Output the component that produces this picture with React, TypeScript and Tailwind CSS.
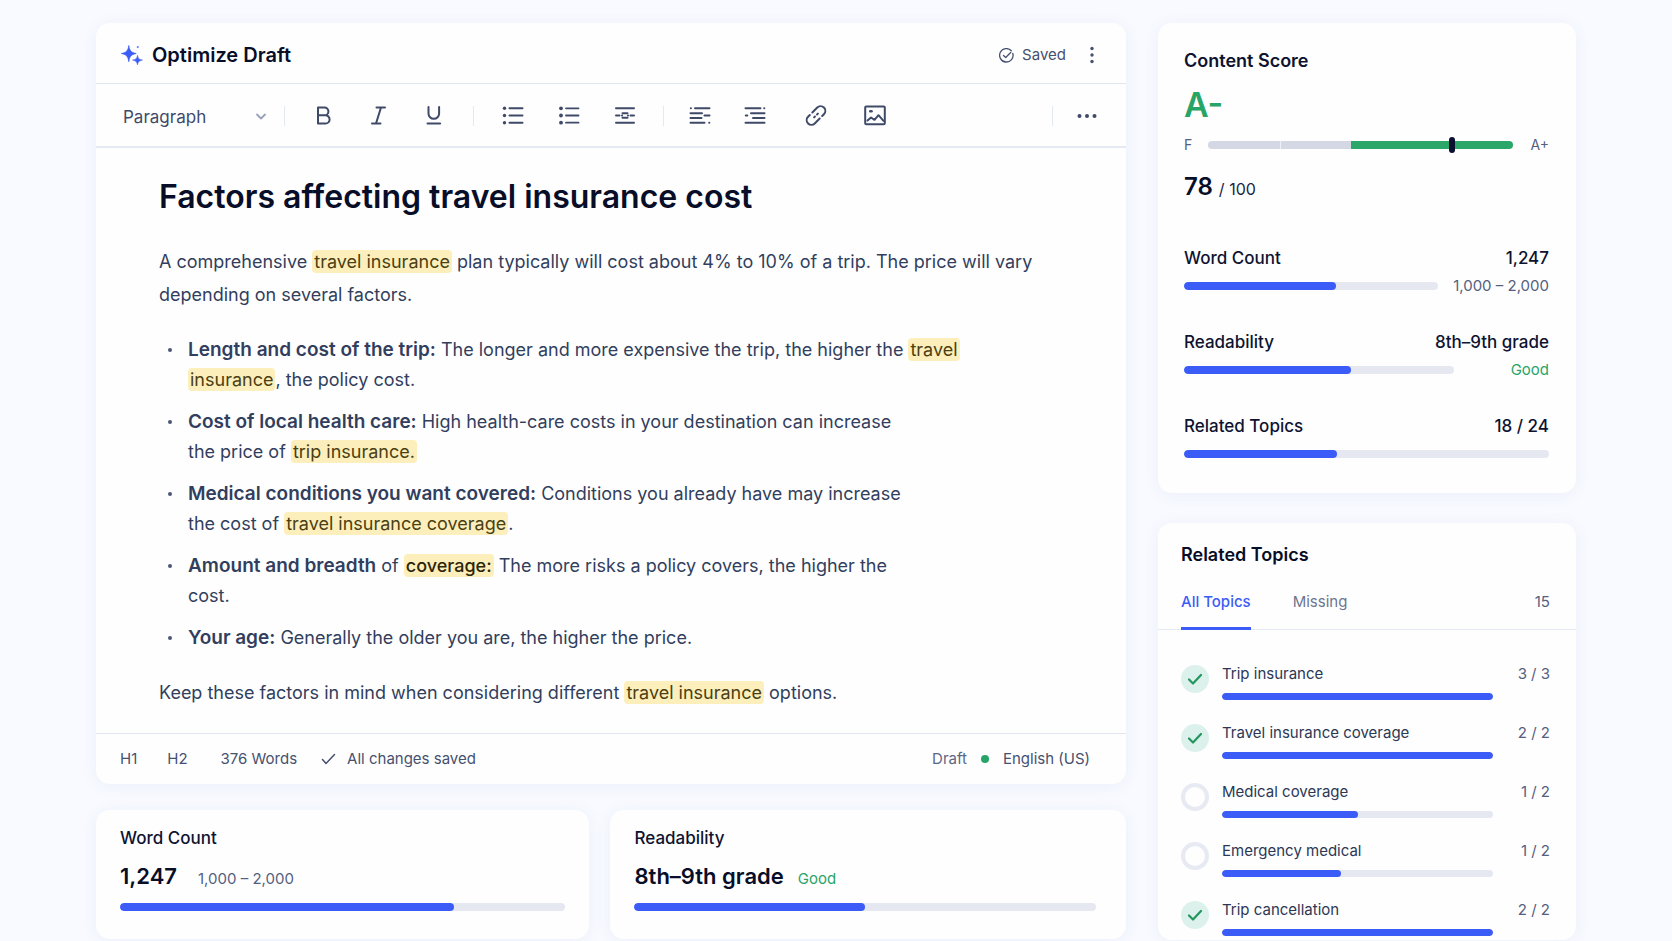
import { useState } from "react";
import type { ReactNode } from "react";

const card =
  "rounded-[14px] bg-[#fefefe] shadow-[0_2px_16px_rgba(70,100,190,0.07)]";

function Svg({ w, h, children }: { w: number; h: number; children: ReactNode }) {
  return (
    <svg
      width={w}
      height={h}
      viewBox={`0 0 ${w} ${h}`}
      fill="none"
      stroke="currentColor"
      strokeWidth="2"
      strokeLinecap="round"
      strokeLinejoin="round"
      aria-hidden="true"
      className="shrink-0"
    >
      {children}
    </svg>
  );
}

const icons = {
  bold: <path d="M5 2.500h6.500a3.900 3.900 0 0 1 0 7.800H5zM5 10.300h7.500a4.100 4.100 0 0 1 0 8.200H5z" />,
  italic: <path d="M8.500 2.500h8.500M4 18.500h8.500M13 2.500l-5 16" />,
  underline: <path d="M5.500 2v6.500a5.300 5.300 0 0 0 10.600 0V2M4.500 18.500h12.600" />,
  bullets: (
    <>
      <path d="M7.500 3.300h13M7.500 10.500h13M7.500 17.700h13" />
      <g fill="currentColor" stroke="none">
        <circle cx="2.500" cy="3.300" r="1.700" />
        <circle cx="2.500" cy="10.500" r="1.700" />
        <circle cx="2.500" cy="17.700" r="1.700" />
      </g>
    </>
  ),
  compact: (
    <>
      <path d="M8 3.300h12.500M8 10.500h12.500M8 17.700h12.500" strokeWidth="1.800" />
      <g fill="currentColor" stroke="none">
        <circle cx="3" cy="3.300" r="1.900" />
        <circle cx="3" cy="10.500" r="1.900" />
        <circle cx="3" cy="17.700" r="1.900" />
      </g>
    </>
  ),
  center: (
    <path d="M2 3.300h18M2 17.700h18M2 10.500h3.500M16.500 10.500H20M8.500 8.300h5M8.500 12.700h5M8 10.500h.1M14 10.500h.1" />
  ),
  outdent: (
    <path d="M1.800 3.300h.1M6 3.300h14.500M1.500 8.200h11.500M1.500 13h11M15.500 10.500h5M1.500 17.700h14M20.200 17.700h.1" />
  ),
  indent: (
    <path d="M1.500 3.300h15M20.200 3.300h.1M7 8.200h13.500M9 13h11.500M1.800 10.500h1.500M1.500 17.700h19" />
  ),
  link: (
    <g transform="rotate(-45 11 10.500)">
      <path d="M10.500 5.800h7a4.700 4.700 0 0 1 0 9.400H15M11.500 15.200h-7a4.700 4.700 0 0 1 0-9.400H7M8.300 10.500h1.200M12.500 10.500h1.200" />
    </g>
  ),
  image: (
    <>
      <rect x="1.200" y="1.500" width="19.600" height="17.800" rx="1" />
      <path d="M3.500 15.500l3.500-3 3.500 2.300 4-4.600 5 5.600" />
      <path d="M6.300 6.300h1.200" strokeWidth="2.600" />
    </>
  ),
};

function Tool({ label, name }: { label: string; name: keyof typeof icons }) {
  return (
    <button type="button" aria-label={label} className="rounded hover:bg-slate-100">
      <Svg w={22} h={21}>
        {icons[name]}
      </Svg>
    </button>
  );
}

function Divider() {
  return <span className="block h-5 w-px bg-[#e3e8f3]" />;
}

function Mark({ children }: { children: ReactNode }) {
  return (
    <mark className="rounded-[4px] bg-[#fdefbb] px-[2px] py-px text-[#4b3f14]">{children}</mark>
  );
}

function Term({ children }: { children: ReactNode }) {
  return <b className="text-[19px] font-semibold">{children}</b>;
}

function Bar({ value, label, thin }: { value: number; label: string; thin?: boolean }) {
  return (
    <div
      role="progressbar"
      aria-label={label}
      aria-valuenow={value}
      aria-valuemin={0}
      aria-valuemax={100}
      className={`w-full overflow-hidden rounded-full bg-[#e5e8f1] ${thin ? "h-[7px]" : "h-2"}`}
    >
      <div className="h-full rounded-full bg-[#3b5cf6]" style={{ width: `${value}%` }} />
    </div>
  );
}

function Item({ children }: { children: ReactNode }) {
  return (
    <li className="flex gap-4">
      <span className="mt-[13px] ml-[9px] size-1 shrink-0 rounded-full bg-[#4d5877]" />
      <p>{children}</p>
    </li>
  );
}

function Metric({
  label,
  value,
  note,
  noteClass,
  percent,
}: {
  label: string;
  value: string;
  note?: string;
  noteClass?: string;
  percent: number;
}) {
  return (
    <div>
      <div className="flex justify-between text-[17px] leading-6 font-medium text-[#0d1330]">
        <span>{label}</span>
        <span>{value}</span>
      </div>
      <div className="mt-1 flex h-6 items-center">
        <Bar value={percent} label={label} />
        {note && <span className={`shrink-0 text-right text-[15px] ${noteClass}`}>{note}</span>}
      </div>
    </div>
  );
}

const topics = [
  { name: "Trip insurance", count: "3 / 3", percent: 100, done: true },
  { name: "Travel insurance coverage", count: "2 / 2", percent: 100, done: true },
  { name: "Medical coverage", count: "1 / 2", percent: 50, done: false },
  { name: "Emergency medical", count: "1 / 2", percent: 44, done: false },
  { name: "Trip cancellation", count: "2 / 2", percent: 100, done: true },
];

function Editor() {
  return (
    <section className={card}>
      <header className="flex h-[61px] items-center border-b border-[#e1e6f1] pt-1 pr-[26px] pl-[25px]">
        <svg width="22" height="20" viewBox="0 0 22 20" fill="#3b5cf6" aria-hidden="true">
          <path d="M7.800.5c.8 5.200 2.200 7 7.400 8-5.200 1.100-6.600 3-7.400 8.200-.8-5.200-2.200-7.100-7.400-8.200 5.200-1 6.600-2.800 7.400-8z" stroke="#3b5cf6" strokeWidth=".7" strokeLinejoin="round" />
          <path d="M16.500 10.200c.6 3.200 1.400 4.200 5 4.900-3.600.8-4.400 1.800-5 4.800-.6-3-1.400-4-5-4.800 3.600-.7 4.400-1.700 5-4.900z" stroke="#3b5cf6" strokeWidth=".5" strokeLinejoin="round" />
          <circle cx="16.800" cy="2" r="1.100" opacity=".8" />
        </svg>
        <h1 className="ml-[9px] text-[20px] leading-6 font-semibold text-[#080d28]">
          Optimize Draft
        </h1>
        <span className="ml-auto flex items-center gap-2 text-[15px] text-[#465170]">
          <svg width="15" height="15" viewBox="0 0 15 15" fill="none" stroke="currentColor" strokeWidth="1.300" strokeLinecap="round" strokeLinejoin="round" aria-hidden="true">
            <path d="M13.800 5.500a6.700 6.700 0 1 1-1.500-2.700M4.500 7.500l2.200 2 5-5" />
          </svg>
          Saved
        </span>
        <button type="button" aria-label="More options" className="ml-[18px] text-[#465170]">
          <svg width="16" height="20" viewBox="0 0 16 20" fill="currentColor" aria-hidden="true">
            <circle cx="8" cy="3.500" r="1.700" />
            <circle cx="8" cy="10" r="1.700" />
            <circle cx="8" cy="16.500" r="1.700" />
          </svg>
        </button>
      </header>

      <div className="flex h-16 items-center border-b-2 border-[#e5e9f3] pt-px pr-[29px] pl-[27px] text-[#3f4a69]">
        <div className="relative w-[144px] pt-1">
          <select
            aria-label="Text style"
            className="h-8 w-full appearance-none bg-transparent text-[17px] outline-none"
          >
            <option>Paragraph</option>
            <option>Heading 1</option>
            <option>Heading 2</option>
          </select>
          <svg width="12" height="8" viewBox="0 0 12 8" fill="none" stroke="#98a2bb" strokeWidth="1.800" strokeLinecap="round" strokeLinejoin="round" aria-hidden="true" className="pointer-events-none absolute top-[15px] right-0">
            <path d="M2 1.500l4 4 4-4" />
          </svg>
        </div>
        <div className="ml-[17px]">
          <Divider />
        </div>
        <div className="ml-7 flex gap-[33px]">
          <Tool label="Bold" name="bold" />
          <Tool label="Italic" name="italic" />
          <Tool label="Underline" name="underline" />
        </div>
        <div className="ml-7">
          <Divider />
        </div>
        <div className="ml-7 flex gap-[34px]">
          <Tool label="Bulleted list" name="bullets" />
          <Tool label="Compact list" name="compact" />
          <Tool label="Align center" name="center" />
        </div>
        <div className="ml-[27px]">
          <Divider />
        </div>
        <div className="ml-[25px] flex gap-[33px]">
          <Tool label="Decrease indent" name="outdent" />
          <Tool label="Increase indent" name="indent" />
        </div>
        <div className="ml-[39px] flex gap-[37px]">
          <Tool label="Insert link" name="link" />
          <Tool label="Insert image" name="image" />
        </div>
        <div className="ml-auto">
          <Divider />
        </div>
        <button type="button" aria-label="More tools" className="ml-6">
          <svg width="20" height="20" viewBox="0 0 20 20" fill="currentColor" aria-hidden="true">
            <circle cx="2.500" cy="10" r="2" />
            <circle cx="10" cy="10" r="2" />
            <circle cx="17.500" cy="10" r="2" />
          </svg>
        </button>
      </div>

      <article className="px-[63px] pt-[25px] pb-[25px] text-[18px] leading-[30px] text-[#323e5d]">
        <h2 className="text-[32px] leading-[48px] font-semibold text-[#080d28]">
          Factors affecting travel insurance cost
        </h2>
        <p className="mt-6 leading-[33px]">
          A comprehensive <Mark>travel insurance</Mark> plan typically will cost about 4% to 10% of
          a trip. The price will vary depending on several factors.
        </p>
        <ul className="mt-6 space-y-3">
          <Item>
            <Term>Length and cost of the trip:</Term> The longer and more expensive the trip, the
            higher the <Mark>travel</Mark>
            <br />
            <Mark>insurance</Mark>, the policy cost.
          </Item>
          <Item>
            <Term>Cost of local health care:</Term> High health-care costs in your destination can
            increase
            <br />
            the price of <Mark>trip insurance.</Mark>
          </Item>
          <Item>
            <Term>Medical conditions you want covered:</Term> Conditions you already have may
            increase
            <br />
            the cost of <Mark>travel insurance coverage</Mark>.
          </Item>
          <Item>
            <Term>Amount and breadth</Term> of{" "}
            <Mark>
              <b className="font-medium text-[#2b2508]">coverage:</b>
            </Mark>{" "}
            The more risks a policy covers, the higher the
            <br />
            cost.
          </Item>
          <Item>
            <Term>Your age:</Term> Generally the older you are, the higher the price.
          </Item>
        </ul>
        <p className="mt-[25px]">
          Keep these factors in mind when considering different <Mark>travel insurance</Mark>{" "}
          options.
        </p>
      </article>

      <footer className="flex h-[51px] items-center border-t border-[#e1e6f1] pr-9 pl-6 text-[15px] text-[#465170]">
        <button type="button">H1</button>
        <button type="button" className="ml-[30px]">
          H2
        </button>
        <span className="ml-[33px]">376 Words</span>
        <span className="ml-6 flex items-center gap-[11px]">
          <svg width="15" height="12" viewBox="0 0 15 12" fill="none" stroke="currentColor" strokeWidth="1.500" strokeLinecap="round" strokeLinejoin="round" aria-hidden="true">
            <path d="M1.500 6.500l3.500 4 8.500-9" />
          </svg>
          All changes saved
        </span>
        <span className="ml-auto text-[#5b6685]">Draft</span>
        <span className="mx-[14px] size-2 rounded-full bg-[#27a567]" />
        <span>English (US)</span>
      </footer>
    </section>
  );
}

function StatCard({
  label,
  value,
  note,
  noteClass,
  percent,
  padding,
}: {
  label: string;
  value: string;
  note: string;
  noteClass: string;
  percent: number;
  padding: string;
}) {
  return (
    <section className={`${card} ${padding} pt-4 pb-7`}>
      <h2 className="text-[17px] leading-6 font-medium text-[#0d1330]">{label}</h2>
      <p className="mt-[10px] flex items-baseline leading-8">
        <span className="text-[22px] font-semibold text-[#080d28]">{value}</span>
        <span className={`text-[15px] ${noteClass}`}>{note}</span>
      </p>
      <div className="mt-2">
        <Bar value={percent} label={label} />
      </div>
    </section>
  );
}

function ScoreCard() {
  return (
    <section className={`${card} pt-[26px] pr-[27px] pb-[27px] pl-[26px]`}>
      <h2 className="text-[18px] leading-6 font-semibold text-[#0d1330]">Content Score</h2>
      <p className="mt-3 text-[34px] leading-10 font-semibold text-[#27a567]">A-</p>
      <div className="mt-[10px] flex items-center text-[14px] leading-5 text-[#54607e]">
        <span className="w-6">F</span>
        <div
          role="meter"
          aria-label="Content score"
          aria-valuenow={78}
          aria-valuemin={0}
          aria-valuemax={100}
          className="relative flex h-2 flex-1"
        >
          <span className="w-[24%] rounded-l-full border-r border-[#eef1f7] bg-[#d3d8e4]" />
          <span className="w-[23%] bg-[#d3d8e4]" />
          <span className="flex-1 rounded-r-full bg-[#2ba76a]" />
          <span className="absolute -top-1 left-[79%] h-4 w-[6px] rounded-full bg-[#0a1030]" />
        </div>
        <span className="w-[36px] text-right">A+</span>
      </div>
      <p className="mt-4 leading-8 text-[#1c2542]">
        <span className="text-[24px] font-semibold text-[#080d28]">78</span>
        <span className="ml-[6px] text-[16px]">/ 100</span>
      </p>
      <div className="mt-[41px] space-y-8">
        <Metric label="Word Count" value="1,247" note="1,000 – 2,000" noteClass="w-[111px] text-[#54607e]" percent={60} />
        <Metric label="Readability" value="8th–9th grade" note="Good" noteClass="w-[95px] text-[#27a567]" percent={62} />
        <Metric label="Related Topics" value="18 / 24" percent={42} />
      </div>
    </section>
  );
}

function TopicsCard() {
  const [tab, setTab] = useState("all");
  const tabClass = (id: string) =>
    tab === id
      ? "border-[#3b5cf6] font-medium text-[#3b5cf6]"
      : "border-transparent text-[#6b7590]";
  return (
    <section className={`${card} pb-1`}>
      <h2 className="px-[23px] pt-5 text-[18px] leading-6 font-semibold text-[#080d28]">
        Related Topics
      </h2>
      <div className="mt-[15px] flex items-end border-b border-[#e5e9f3] pr-[26px] pl-[23px] text-[15px] leading-6">
        <div role="tablist" className="-mb-px flex gap-[42px]">
          <button type="button" role="tab" aria-selected={tab === "all"} onClick={() => setTab("all")} className={`border-b-[3px] pt-[8px] pb-[13px] ${tabClass("all")}`}>
            All Topics
          </button>
          <button type="button" role="tab" aria-selected={tab === "missing"} onClick={() => setTab("missing")} className={`border-b-[3px] pt-[8px] pb-[13px] ${tabClass("missing")}`}>
            Missing
          </button>
        </div>
        <span className="ml-auto pb-[15px] text-[#54607e]">15</span>
      </div>
      <ul className="space-y-[21px] pt-8 pr-[26px] pl-[23px]">
        {topics.map((t) => (
          <li key={t.name} className="flex">
            {t.done ? (
              <span role="img" aria-label="Covered" className="mt-[3px] flex size-7 shrink-0 items-center justify-center rounded-full bg-[#dcf1ec]">
                <svg width="16" height="14" viewBox="0 0 16 14" fill="none" stroke="#23955e" strokeWidth="2.200" strokeLinecap="round" strokeLinejoin="round">
                  <path d="M2 7.500l4 4 8-8.500" />
                </svg>
              </span>
            ) : (
              <span role="img" aria-label="Not covered" className="mt-[3px] size-7 shrink-0 rounded-full border-4 border-[#e7eaf2]" />
            )}
            <div className="ml-[13px] flex-1">
              <p className="text-[15px] leading-6 text-[#2c3755]">{t.name}</p>
              <div className="mt-[7px]">
                <Bar thin value={t.percent} label={t.name} />
              </div>
            </div>
            <span className="w-[57px] text-right text-[15px] leading-6 text-[#54607e]">
              {t.count}
            </span>
          </li>
        ))}
      </ul>
    </section>
  );
}

export default function App() {
  return (
    <main className="min-h-screen bg-[#f8faff] px-24 pt-[23px] font-['Inter',sans-serif]">
      <div className="grid grid-cols-[minmax(0,1fr)_418px] items-start gap-8">
        <div className="space-y-[26px]">
          <Editor />
          <div className="grid grid-cols-[493fr_515fr] gap-[21px]">
            <StatCard label="Word Count" value="1,247" note="1,000 – 2,000" noteClass="ml-[21px] text-[#54607e]" percent={75} padding="px-6" />
            <StatCard label="Readability" value="8th–9th grade" note="Good" noteClass="ml-[14px] text-[#27a567]" percent={50} padding="pr-[30px] pl-6" />
          </div>
        </div>
        <div className="space-y-[30px]">
          <ScoreCard />
          <TopicsCard />
        </div>
      </div>
    </main>
  );
}
